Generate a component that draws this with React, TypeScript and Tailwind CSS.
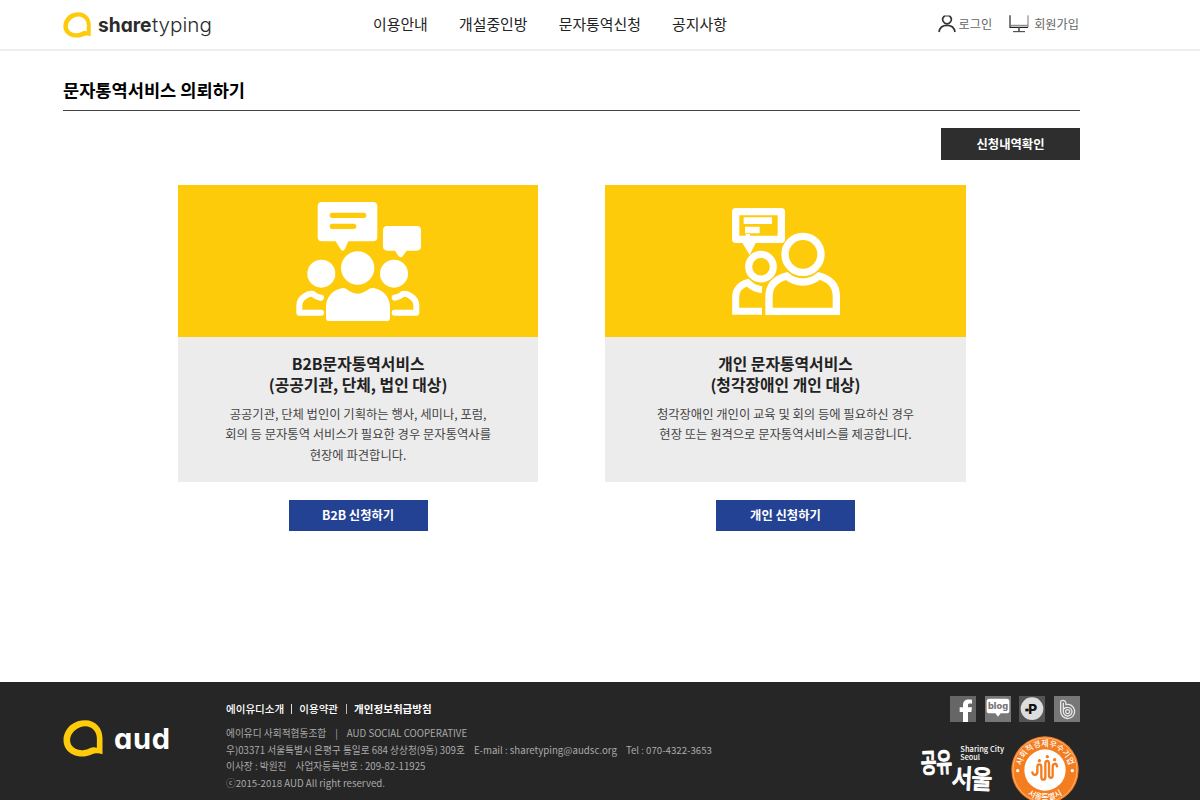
import type { ReactNode } from "react";

function DropMark({ className }: { className: string }) {
  return (
    <svg viewBox="0 0 120 112" className={className} fill="#fecb0a">
      <path
        fillRule="evenodd"
        d="M67 1C98 1 119 25 119 55V104C107 99 98 100 84 105C58 116 24 110 8 86C-6 62 2 34 22 16C36 5 52 1 67 1ZM67 19C87 19 102 35 102 55V84C94 81 86 82 77 87C56 96 34 91 24 75C16 58 24 41 36 31C46 23 57 19 67 19Z"
      />
    </svg>
  );
}

function UserIcon() {
  return (
    <svg viewBox="0 0 54 54" className="h-[18px] w-[18px]" fill="none" stroke="#333" strokeWidth="5">
      <path d="M20 3C13 8 13 15 16 20C21 29 33 29 38 20C41 15 41 8 34 3" />
      <path d="M19 3H35" strokeWidth="3" />
      <path d="M3 51C5 38 14 31 27 31S49 38 51 51" />
    </svg>
  );
}

function MonitorIcon() {
  return (
    <svg viewBox="0 0 60 54" className="h-[18px] w-5" fill="none">
      <path d="M3 1V37H57" stroke="#222" strokeWidth="3.5" />
      <path d="M57 1V37M3 31H57" stroke="#777" strokeWidth="3" />
      <path d="M30 37V49" stroke="#555" strokeWidth="5" />
      <path d="M12 50H48" stroke="#333" strokeWidth="3" />
    </svg>
  );
}

function GroupIcon() {
  return (
    <svg viewBox="0 0 480 420" className="mt-[5px] ml-[102px] h-[140px] w-40" fill="#fff">
      <path d="M126 36H279Q292 36 292 49V141Q292 154 279 154H205L195 176Q188 188 181 176L167 154H126Q113 154 113 141V49Q113 36 126 36Z" />
      <path d="M157 76H251M157 109H221" stroke="#fecb0a" strokeWidth="16" strokeLinecap="round" />
      <path d="M322 108H410Q423 108 423 121V169Q423 182 410 182H380L368 199Q362 205 356 199L345 182H322Q309 182 309 169V121Q309 108 322 108Z" />
      <circle cx="124" cy="251" r="42" />
      <circle cx="342" cy="251" r="42" />
      <circle cx="233" cy="234" r="50" />
      <path d="M187 294Q197 293 204 301Q233 321 262 301Q270 293 281 294C309 299 330 321 330 350V383Q330 393 320 393H148Q138 393 138 383V350C138 321 159 299 187 294Z" />
      <g fill="none" stroke="#fff" strokeWidth="18" strokeLinecap="round" strokeLinejoin="round">
        <path d="M123 323Q108 321 99 312Q87 309 74 319Q58 329 58 347V368H123" />
        <path d="M344 323Q359 321 368 312Q380 309 393 319Q409 329 409 347V368H344" />
      </g>
    </svg>
  );
}

function PairIcon() {
  return (
    <svg viewBox="0 0 480 420" className="mt-[5px] ml-[105px] h-[140px] w-40" fill="none" stroke="#fff">
      <path d="M77 65H214V148H77Z" strokeWidth="22" strokeLinejoin="round" />
      <path d="M95 155L119 195L139 155L118 142Z" fill="#fff" stroke="none" />
      <path d="M107 138L113 145L120 138V132H107Z" fill="#fff" stroke="none" />
      <path d="M101 92H186M105 120H149" strokeWidth="20" />
      <circle cx="279" cy="193" r="54" strokeWidth="22" />
      <circle cx="153" cy="230" r="37" strokeWidth="21" />
      <path d="M230 258C196 267 177 288 177 319V364H379V319C379 288 362 267 327 258C298 282 259 282 230 258Z" strokeWidth="22" />
      <path d="M156 299Q131 297 113 278C91 284 77 299 77 321V364H156" strokeWidth="21" />
    </svg>
  );
}

type ServiceProps = {
  icon: ReactNode;
  title: string[];
  lines: string[];
  action: string;
};

function Service({ icon, title, lines, action }: ServiceProps) {
  return (
    <section className="flex w-[360.6px] flex-col items-center">
      <div className="h-[152px] w-full bg-[#fecb0a]">{icon}</div>
      <div className="h-[145px] w-full bg-[#ececec] pt-[17px] text-center">
        <h2 className="text-[15.84px] leading-[20.5px] font-bold text-[#222]">
          {title.map((t) => (
            <span key={t} className="block">{t}</span>
          ))}
        </h2>
        <p className="mt-[8.5px] text-[12.32px] leading-[20.6px] text-[#444]">
          {lines.map((t) => (
            <span key={t} className="block whitespace-nowrap">{t}</span>
          ))}
        </p>
      </div>
      <button className="mt-[17.5px] h-[31.5px] w-[139px] bg-[#244294] text-[12.32px] leading-[31px] font-bold text-white">
        {action}
      </button>
    </section>
  );
}

function Socials() {
  return (
    <div className="flex gap-[8.6px]">
      <svg viewBox="0 0 78 78" className="h-[26px] w-[26px]">
        <rect width="78" height="78" fill="#666" />
        <path d="M39 78V48H29V34H39V27C39 14 47 8 66 11V23C56 22 54 23 54 29V34H66L64 48H54V78Z" fill="#fff" />
      </svg>
      <svg viewBox="0 0 78 78" className="h-[26px] w-[26px]">
        <rect width="78" height="78" fill="#777" />
        <path d="M13 8H65Q73 8 73 16V44Q73 52 65 52H47L39 62L31 52H13Q5 52 5 44V16Q5 8 13 8Z" fill="#fff" />
        <text x="9" y="38" textLength="60" lengthAdjust="spacingAndGlyphs" fontFamily="Inter, sans-serif" fontWeight="800" fontSize="26" fill="#777">blog</text>
      </svg>
      <svg viewBox="0 0 78 78" className="h-[26px] w-[26px]">
        <rect width="78" height="78" fill="#555" />
        <circle cx="39" cy="38" r="34" fill="#ddd" />
        <rect x="19" y="38" width="10" height="8" fill="#111" />
        <text x="28" y="53" fontFamily="Inter, sans-serif" fontWeight="800" fontSize="41" fill="#111">P</text>
      </svg>
      <svg viewBox="0 0 78 78" className="h-[26px] w-[26px]" fill="none" stroke="#e8e8e8" strokeWidth="4">
        <rect width="78" height="78" fill="#777" stroke="none" />
        <path d="M20 18Q20 13 25 13Q36 13 36 24V26A21 21 0 1 1 20 46Z" />
        <path d="M28 20V46A13 13 0 1 0 41 34Q31 34 28 40" />
        <path d="M35 46A6 6 0 1 0 41 41Q35 41 35 46Z" />
      </svg>
    </div>
  );
}

function SharingCity() {
  return (
    <svg viewBox="0 0 270 165" className="mt-[6px] h-[55px] w-[90px] overflow-visible" fill="#fff">
      <g fontFamily="'Noto Sans CJK KR', sans-serif" fontWeight="500" stroke="#fff" strokeWidth="2.5" strokeLinejoin="round">
        <text transform="translate(1 93) rotate(-3) scale(.86 1.35)" fontSize="60" letterSpacing="-1">공유</text>
        <text transform="translate(91 136) rotate(3) scale(1.06 1.22)" fontSize="64" letterSpacing="-3">서울</text>
      </g>
      <g fontFamily="'Noto Sans CJK KR', sans-serif" fontWeight="500" fontSize="22">
        <text x="118" y="31" textLength="131" lengthAdjust="spacingAndGlyphs">Sharing City</text>
        <text x="118" y="55" textLength="59" lengthAdjust="spacingAndGlyphs">Seoul</text>
      </g>
    </svg>
  );
}

function SeoulBadge() {
  return (
    <svg viewBox="0 0 204 204" className="h-[68px] w-[68px]" fill="none">
      <defs>
        <path id="badge-top" d="M30 102A72 72 0 0 1 174 102" />
        <path id="badge-bottom" d="M12 102A90 90 0 0 0 192 102" />
      </defs>
      <circle cx="102" cy="102" r="101" fill="#f47d20" />
      <circle cx="102" cy="102" r="96" stroke="#ffd1a6" strokeWidth="2" />
      <circle cx="102" cy="102" r="62" fill="#fff" />
      <g fill="#fff" fontFamily="'Noto Sans CJK KR', sans-serif" fontWeight="500" fontSize="24">
        <text textAnchor="middle"><textPath href="#badge-top" startOffset="50%">사회적경제우수기업</textPath></text>
        <text textAnchor="middle"><textPath href="#badge-bottom" startOffset="50%">서울특별시</textPath></text>
      </g>
      <circle cx="20" cy="104" r="5" fill="#fff" />
      <circle cx="184" cy="104" r="5" fill="#fff" />
      <g stroke="#f47d20" strokeWidth="7" strokeLinecap="round">
        <path d="M64 109C68 121 79 117 79 107V94C79 82 91 82 91 94V122C91 134 103 134 103 122V83C103 72 114 72 114 83V117C114 128 125 128 125 117V93C125 81 136 80 138 91" />
      </g>
      <g fill="#f47d20">
        <circle cx="85" cy="74" r="5" />
        <circle cx="109" cy="62" r="5" />
        <circle cx="131" cy="71" r="5" />
      </g>
    </svg>
  );
}

export default function App() {
  return (
    <div className="flex h-[800px] w-[1200px] flex-col overflow-hidden bg-white font-['Noto_Sans_CJK_KR',sans-serif] text-[#222]">
      <header className="h-[51px] shrink-0 border-b-2 border-[#eee]">
        <div className="ml-[63px] flex h-[49px] w-[1017px] items-center">
          <div className="flex w-[310px] items-center">
            <DropMark className="h-[26px] w-7" />
            <svg viewBox="0 0 118 28" className="ml-[7px] h-7 w-[118px] overflow-visible [font-feature-settings:'cv11']" fill="#2b2b2b" fontFamily="Inter, sans-serif" fontSize="20">
              <text x="0" y="20.5" fontWeight="700" textLength="53.5" lengthAdjust="spacingAndGlyphs">share</text>
              <text x="54" y="20.5" fontWeight="300" textLength="60" lengthAdjust="spacingAndGlyphs">typing</text>
            </svg>
          </div>
          <nav className="flex gap-[31.2px] text-[14.9px] leading-none">
            <a>이용안내</a>
            <a>개설중인방</a>
            <a>문자통역신청</a>
            <a>공지사항</a>
          </nav>
          <div className="ml-auto flex items-center text-[12.2px] text-[#666]">
            <UserIcon />
            <a className="ml-[3px]">로그인</a>
            <span className="ml-[17px] flex"><MonitorIcon /></span>
            <a className="mr-px ml-[5px]">회원가입</a>
          </div>
        </div>
      </header>

      <main className="ml-[63px] flex w-[1017px] flex-1 flex-col">
        <h1 className="h-[60px] border-b border-[#444] pt-[25px] text-[17.6px] leading-7 font-bold text-black">
          문자통역서비스 의뢰하기
        </h1>
        <button className="mt-[17px] h-8 w-[139px] self-end bg-[#2e2e2e] text-[12.32px] leading-8 font-bold text-white">
          신청내역확인
        </button>
        <div className="mt-[25px] ml-[114.8px] flex gap-[66.8px]">
          <Service
            icon={<GroupIcon />}
            title={["B2B문자통역서비스", "(공공기관, 단체, 법인 대상)"]}
            lines={[
              "공공기관, 단체 법인이 기획하는 행사, 세미나, 포럼,",
              "회의 등 문자통역 서비스가 필요한 경우 문자통역사를",
              "현장에 파견합니다.",
            ]}
            action="B2B 신청하기"
          />
          <Service
            icon={<PairIcon />}
            title={["개인 문자통역서비스", "(청각장애인 개인 대상)"]}
            lines={[
              "청각장애인 개인이 교육 및 회의 등에 필요하신 경우",
              "현장 또는 원격으로 문자통역서비스를 제공합니다.",
            ]}
            action="개인 신청하기"
          />
        </div>
      </main>

      <footer className="h-[118px] shrink-0 overflow-hidden bg-[#262626]">
        <div className="ml-[63px] flex w-[1017px]">
          <div className="flex w-[163px] items-start pt-[38px]">
            <DropMark className="h-[37px] w-10" />
            <svg viewBox="0 0 60 36" className="ml-[11px] h-9 w-[60px] overflow-visible [font-feature-settings:'cv11']" fill="#fff" fontFamily="Inter, sans-serif" fontSize="29" fontWeight="700">
              <text x="0" y="29" textLength="56">aud</text>
            </svg>
          </div>
          <div className="pt-[18px]">
            <div className="flex items-center text-[10.56px] leading-[18px] text-white">
              <a className="font-medium">에이유디소개</a>
              <i className="mx-[7px] h-2.5 w-px bg-[#ddd]" />
              <a className="font-medium">이용약관</a>
              <i className="mx-[7.5px] h-2.5 w-px bg-[#bbb]" />
              <a className="font-bold">개인정보취급방침</a>
            </div>
            <div className="mt-[7px] text-[9.7px] leading-[16.5px] text-[#aaa]">
              <p className="flex gap-[9px]"><span>에이유디 사회적협동조합</span><span>|</span><span>AUD SOCIAL COOPERATIVE</span></p>
              <p className="flex gap-[9px]"><span>우)03371 서울특별시 은평구 통일로 684 상상청(9동) 309호</span><span>E-mail : sharetyping@audsc.org</span><span>Tel : 070-4322-3653</span></p>
              <p className="flex gap-[9px]"><span>이사장 : 박원진</span><span>사업자등록번호 : 209-82-11925</span></p>
              <p>ⓒ2015-2018 AUD All right reserved.</p>
            </div>
          </div>
          <div className="ml-auto flex flex-col items-end pt-[13.5px]">
            <Socials />
            <div className="mt-[14px] mr-px flex">
              <SharingCity />
              <SeoulBadge />
            </div>
          </div>
        </div>
      </footer>
    </div>
  );
}
